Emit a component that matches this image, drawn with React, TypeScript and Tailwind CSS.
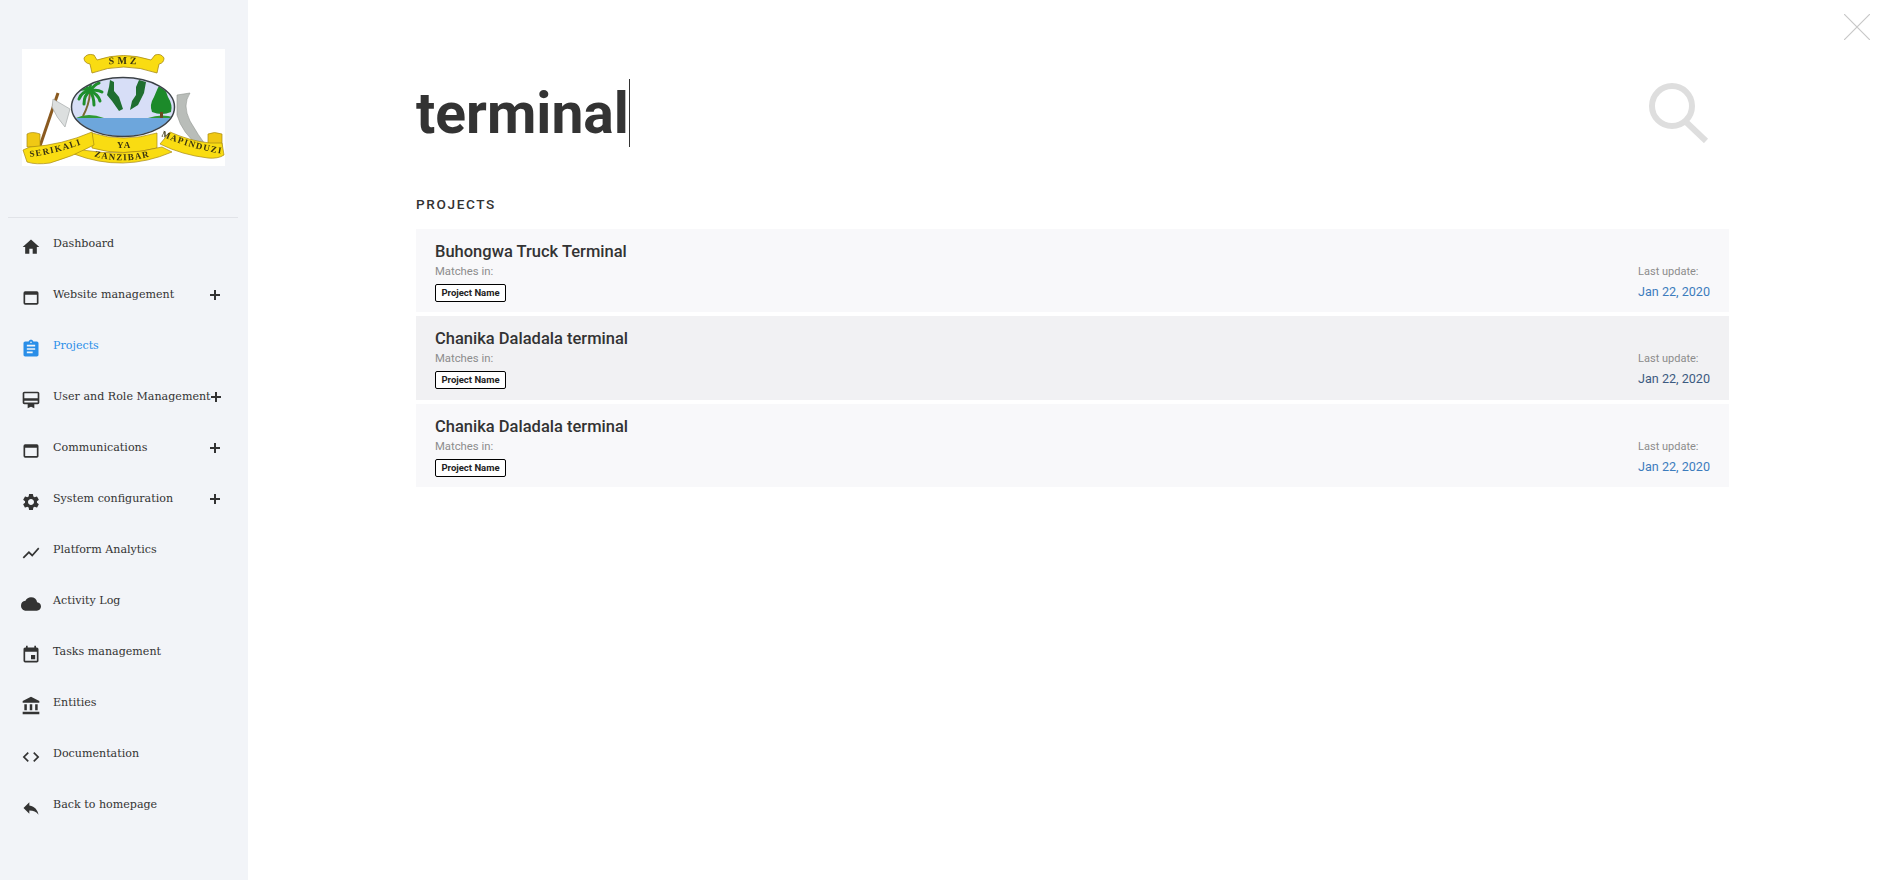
import type { IconType } from 'react-icons'
import {
  MdAccountBalance,
  MdAssignment,
  MdCardMembership,
  MdCloud,
  MdCode,
  MdEvent,
  MdHome,
  MdReply,
  MdSettings,
  MdShowChart,
  MdWebAsset,
} from 'react-icons/md'

interface NavItem {
  label: string
  icon: IconType
  expandable?: boolean
  active?: boolean
}

const navItems: NavItem[] = [
  { label: 'Dashboard', icon: MdHome },
  { label: 'Website management', icon: MdWebAsset, expandable: true },
  { label: 'Projects', icon: MdAssignment, active: true },
  { label: 'User and Role Management', icon: MdCardMembership, expandable: true },
  { label: 'Communications', icon: MdWebAsset, expandable: true },
  { label: 'System configuration', icon: MdSettings, expandable: true },
  { label: 'Platform Analytics', icon: MdShowChart },
  { label: 'Activity Log', icon: MdCloud },
  { label: 'Tasks management', icon: MdEvent },
  { label: 'Entities', icon: MdAccountBalance },
  { label: 'Documentation', icon: MdCode },
  { label: 'Back to homepage', icon: MdReply },
]

const results = [
  { title: 'Buhongwa Truck Terminal', hovered: false },
  { title: 'Chanika Daladala terminal', hovered: true },
  { title: 'Chanika Daladala terminal', hovered: false },
]

function Logo() {
  return (
    <svg viewBox="0 0 203 117" className="block h-[117px] w-[203px] bg-white blur-[0.4px]">
      <defs>
        <clipPath id="oval">
          <ellipse cx="101" cy="58" rx="51" ry="29" />
        </clipPath>
        <path id="ribbon-left" d="M8 108 Q38 104 68 92" />
        <path id="ribbon-right" d="M139 87 Q168 100 201 105" />
        <path id="ribbon-bottom" d="M70 107 Q101 116 134 106" />
        <path id="ribbon-top" d="M66 17 Q101 13 138 17" />
      </defs>

      {/* top banner */}
      <path d="M62 9 Q65 4 72 6 L75 11 Q101 2 129 11 L133 6 Q139 4 142 9 Q142 14 137 15 L135 24 Q101 12 70 24 L68 15 Q62 14 62 9Z" fill="#f9dc12" stroke="#a88a12" strokeWidth="0.8" />
      <text fontFamily="'Liberation Serif', serif" fontSize="10" fontWeight="700" letterSpacing="3" fill="#3a3410">
        <textPath href="#ribbon-top" startOffset="29%">SMZ</textPath>
      </text>

      {/* axe */}
      <path d="M36 44 L18 97" stroke="#8a5a20" strokeWidth="3" />
      <path d="M31 50 L48 60 L43 78 Q34 68 30 58Z" fill="#dcdfdf" stroke="#9aa0a0" strokeWidth="0.6" />

      {/* sickle */}
      <path d="M155 46 L168 44 Q160 56 168 72 Q176 86 185 98 L178 98 Q160 84 155 66Z" fill="#b9bdb9" stroke="#8f938f" strokeWidth="0.6" />

      {/* shield */}
      <g clipPath="url(#oval)">
        <rect x="48" y="28" width="106" height="42" fill="#d7def7" />
        <rect x="48" y="69" width="106" height="20" fill="#6da6dc" />
        <path d="M54 69 Q66 63 82 69Z" fill="#2f9a34" />
        <path d="M126 69 Q140 64 154 69Z" fill="#2f9a34" />
        <path d="M61 67 Q67 56 68 44" stroke="#7a6a30" strokeWidth="2" fill="none" />
        <g stroke="#1f8f2c" strokeWidth="3" strokeLinecap="round" fill="none">
          <path d="M68 42 Q60 38 56 42" />
          <path d="M68 42 Q60 42 57 50" />
          <path d="M68 42 Q62 46 62 55" />
          <path d="M68 42 Q62 34 60 33" />
          <path d="M68 42 Q68 34 70 30" />
          <path d="M68 42 Q73 35 77 34" />
          <path d="M68 42 Q75 40 80 43" />
          <path d="M68 42 Q76 45 78 52" />
          <path d="M68 42 Q72 48 72 56" />
        </g>
        <path d="M88 31 L92 33 L92 42 L97 48 L101 60 L97 62 L90 52 L85 46 L87 38Z" fill="#1f6e30" />
        <path d="M117 31 L124 33 L122 44 L116 56 L108 61 L110 52 L114 46 L114 38Z" fill="#1f6e30" />
        <path d="M139 33 Q144 40 146 48 Q151 56 149 63 Q140 67 130 63 Q127 56 132 48 Q135 40 139 33Z" fill="#1c8a2a" />
        <rect x="138" y="63" width="3" height="6" fill="#6b4a20" />
      </g>
      <ellipse cx="101" cy="58" rx="51.5" ry="29.5" fill="none" stroke="#3b4148" strokeWidth="1.5" />

      {/* bottom ribbons */}
      <path d="M70 84 Q101 94 135 84 L135 99 Q101 108 70 99Z" fill="#f9dc12" stroke="#a88a12" strokeWidth="0.7" />
      <path d="M60 101 Q101 108 140 98 L150 103 Q101 124 52 105Z" fill="#f9dc12" stroke="#a88a12" strokeWidth="0.7" />
      <path d="M5 85 Q10 82 18 85 L18 98 L5 98Z" fill="#f0c814" stroke="#a88a12" strokeWidth="0.7" />
      <path d="M186 85 Q192 82 200 85 L200 98 L186 98Z" fill="#f0c814" stroke="#a88a12" strokeWidth="0.7" />
      <path d="M1 101 L8 98 Q40 96 70 83 L72 96 Q50 108 28 114 Q14 116 5 113Z" fill="#f9dc12" stroke="#a88a12" strokeWidth="0.7" />
      <path d="M148 83 Q168 92 188 94 L200 94 L202 106 Q196 110 186 109 Q160 106 138 95Z" fill="#f9dc12" stroke="#a88a12" strokeWidth="0.7" />

      <g fontFamily="'Liberation Serif', serif" fontSize="9" fontWeight="700" letterSpacing="1.2" fill="#3a3410">
        <text>
          <textPath href="#ribbon-left">SERIKALI</textPath>
        </text>
        <text>
          <textPath href="#ribbon-right">MAPINDUZI</textPath>
        </text>
        <text>
          <textPath href="#ribbon-bottom" startOffset="3%">ZANZIBAR</textPath>
        </text>
        <text x="95" y="99">YA</text>
      </g>
    </svg>
  )
}

function PlusIcon() {
  return (
    <svg viewBox="0 0 10 10" className="ml-auto h-[10px] w-[10px] shrink-0" stroke="#333333" strokeWidth="2">
      <path d="M5 0 V10 M0 5 H10" />
    </svg>
  )
}

function Sidebar() {
  return (
    <aside className="flex h-full w-[248px] shrink-0 flex-col bg-[#f2f4f8] font-['DejaVu_Serif',serif]">
      <div className="ml-2 mr-[10px] flex h-[218px] items-start border-b border-[#e1e3e8] pl-[14px] pt-[49px]">
        <Logo />
      </div>
      <nav className="flex flex-col">
        {navItems.map((item) => {
          const Icon = item.icon
          return (
            <a
              key={item.label}
              className={`flex h-[51px] items-center pl-[21px] pr-[28px] text-[11.1px] whitespace-nowrap ${
                item.active ? 'text-[#2a8ee8]' : 'text-[#333333]'
              }`}
            >
              <Icon className="mr-3 mt-[6px] shrink-0" size={20} />
              <span className="mt-[2px]">{item.label}</span>
              {item.expandable && <PlusIcon />}
            </a>
          )
        })}
      </nav>
    </aside>
  )
}

export default function App() {
  return (
    <div className="relative flex h-screen overflow-hidden bg-white font-['Roboto',sans-serif] text-[#333333]">
      <Sidebar />

      <main className="ml-[168px] w-[1313px]">
        <div className="flex h-[190px] items-start justify-between pt-[79px]">
          <div className="flex h-[68px] items-center">
            <span className="text-[57px] font-bold leading-none">terminal</span>
            <span className="h-[68px] w-px bg-[#333333]" />
          </div>
          <svg viewBox="0 0 60 60" className="mr-[20px] mt-[4px] h-[60px] w-[60px]" fill="none" stroke="#dedede" strokeWidth="6">
            <circle cx="23" cy="23" r="20" />
            <path d="M36 38 L57 58" />
          </svg>
        </div>

        <h2 className="mb-[17px] h-[22px] text-[13.6px] font-medium uppercase leading-[28px] tracking-[0.12em]">Projects</h2>

        <div className="flex flex-col gap-1">
          {results.map((result, i) => (
            <div
              key={i}
              className={`flex h-[83.4px] items-start justify-between px-[19px] pt-[12px] ${
                result.hovered ? 'bg-[#f1f1f3]' : 'bg-[#f8f8fa]'
              }`}
            >
              <div>
                <div className="text-[16.5px] font-medium leading-[22px]">{result.title}</div>
                <div className="mt-[1px] text-[11.3px] leading-[16px] text-[#8c8c8c]">Matches in:</div>
                <span className="mt-[4px] block w-[71px] rounded-[2px] border border-black bg-white py-px text-center text-[9.5px] font-bold leading-[14px] text-[#222222]">
                  Project Name
                </span>
              </div>
              <div className="pt-[23px]">
                <div className="text-[11px] leading-[16px] text-[#8c8c8c]">Last update:</div>
                <div className={`mt-[3px] text-[12.6px] leading-[18px] ${result.hovered ? 'text-[#3c5a80]' : 'text-[#3d7cbd]'}`}>
                  Jan 22, 2020
                </div>
              </div>
            </div>
          ))}
        </div>
      </main>

      {/* close button */}
      <button className="absolute right-[28px] top-[14px]">
        <svg viewBox="0 0 26 26" className="block h-[26px] w-[26px]" stroke="#c8c8c8" strokeWidth="1.2">
          <path d="M0 0 L26 26 M26 0 L0 26" />
        </svg>
      </button>
    </div>
  )
}
